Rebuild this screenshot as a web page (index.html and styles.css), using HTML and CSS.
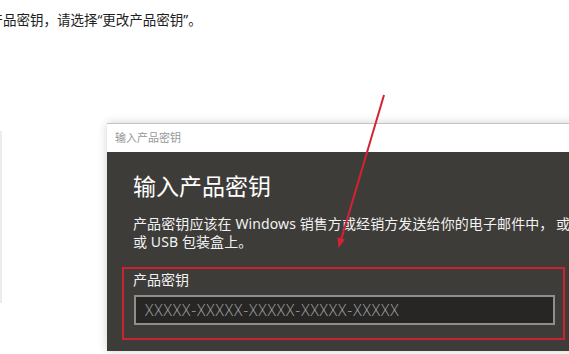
FILE: index.html
```html
<!DOCTYPE html>
<html lang="zh-CN">
<head>
    <meta charset="UTF-8">
    <meta name="viewport" content="width=device-width, initial-scale=1.0">
    <title>输入产品密钥</title>
    <link rel="stylesheet" href="styles.css">
</head>
<body>

    <p class="intro">产品密钥，请选择“更改产品密钥”。</p>

    <div class="stage">
        <div class="page-rule"></div>

        <div class="dialog">
            <div class="titlebar">输入产品密钥</div>
            <div class="dialog-body">
                <h1>输入产品密钥</h1>
                <p class="desc">产品密钥应该在 Windows 销售方或经销方发送给你的电子邮件中，&thinsp;或在 Windows DVD<br>或 USB 包装盒上。</p>

                <div class="field">
                    <label for="keyInput">产品密钥</label>
                    <input type="text" id="keyInput" placeholder="XXXXX-XXXXX-XXXXX-XXXXX-XXXXX">
                </div>
            </div>
        </div>
    </div>

    <!-- red annotation arrow -->
    <svg class="arrow" width="569" height="354" viewBox="0 0 569 354">
        <line x1="384" y1="95" x2="341" y2="240" stroke="#d42232" stroke-width="2"/>
        <polygon points="338.5,248 345,239.5 337.5,237.3" fill="#d42232"/>
    </svg>

</body>
</html>
```

FILE: styles.css
```css
body {
    margin: 0;
    width: 569px;
    height: 354px;
    overflow: hidden;
    position: relative;
    background: #fff;
    font-family: "Noto Sans", "Noto Sans CJK SC", sans-serif;
}

.intro {
    margin: 0 0 0 -10.5px;
    padding-top: 12px;
    font-size: 13.5px;
    line-height: 16px;
    color: #1e1e1e;
    white-space: nowrap;
}

.stage {
    display: flex;
    align-items: flex-start;
    margin-top: 95px;
}

.page-rule {
    width: 0;
    height: 172px;
    margin-top: 8px;
    border-left: 2px solid #ececec;
}

.dialog {
    flex-shrink: 0;
    width: 480px;
    margin-left: 105px;
    box-shadow: 0 0 9px rgba(0, 0, 0, 0.18);
}

.titlebar {
    height: 28px;
    line-height: 28px;
    padding-left: 8px;
    border-top: 1px solid #c4c4c4;
    background: #fff;
    font-size: 11px;
    color: #979797;
}

.dialog-body {
    height: 179px;
    padding: 20px 0 0 26px;
    background: #3e3c39;
    color: #fff;
}

h1 {
    margin: 0;
    font-size: 23px;
    font-weight: normal;
    line-height: 28px;
}

.desc {
    margin: 15px 0 0;
    font-size: 14px;
    line-height: 18px;
    letter-spacing: 0.1px;
    color: #f2f2f2;
    white-space: nowrap;
}

.field {
    width: 443px;
    margin: 16px 0 0 -11px;
    padding: 2px 0 13px 9px;
    border: 2px solid #c8232f;
    box-sizing: border-box;
}

.field label {
    display: block;
    font-size: 14px;
    line-height: 18px;
    color: #f2f2f2;
}

.field input {
    display: block;
    width: 421px;
    height: 30px;
    margin: 6px 0 0 1px;
    padding: 0 0 0 9px;
    border: 2px solid #8e8e8e;
    box-sizing: border-box;
    background: #272625;
    font-family: "Open Sans", sans-serif;
    font-size: 15.5px;
    font-weight: 300;
    letter-spacing: 0.9px;
    color: #ddd;
    outline: none;
}

.field input::placeholder {
    color: #a4a4a4;
}

.arrow {
    position: absolute;
    left: 0;
    top: 0;
}
```
